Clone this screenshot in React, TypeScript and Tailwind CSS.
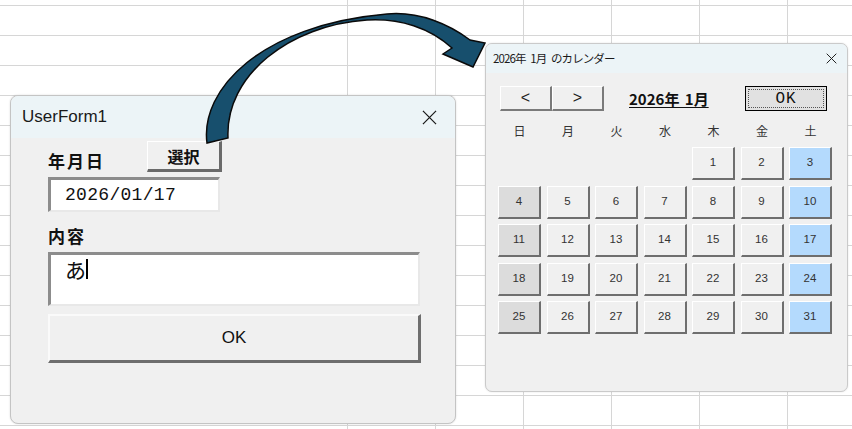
import React from 'react';

const JP = "font-['Noto_Sans_CJK_JP','Noto_Sans',sans-serif]";

function GridBackground() {
  const rows = Array.from({ length: 15 });
  const cols = Array.from({ length: 6 });
  return (
    <>
      <div className="absolute inset-0 flex flex-col">
        <div className="h-[5px] shrink-0" />
        {rows.map((_, i) => (
          <div key={i} className="h-[30px] shrink-0 border-t border-[#d6d6d6]" />
        ))}
      </div>
      <div className="absolute inset-0 flex">
        <div className="w-[347px] shrink-0" />
        {cols.map((_, i) => (
          <div key={i} className="w-[88px] shrink-0 border-l border-[#d6d6d6]" />
        ))}
      </div>
    </>
  );
}

function CloseX({ size, stroke }: { size: number; stroke: number }) {
  return (
    <svg width={size} height={size} viewBox="0 0 16 16">
      <path d="M1 1 L15 15 M15 1 L1 15" stroke="#1a1a1a" strokeWidth={stroke} fill="none" />
    </svg>
  );
}

function UserForm() {
  return (
    <div className="absolute left-[10px] top-[95px] w-[446px] h-[329px] rounded-[8px] border border-[#c4c4c4] bg-[#f0f0f0] overflow-hidden shadow-[0_0_2px_rgba(0,0,0,0.15)]">
      <div className="h-[42px] bg-[#ecf4f7] flex items-center justify-between pl-[11px] pr-[18px]">
        <span className="font-['Liberation_Sans',sans-serif] text-[17px] text-[#1a1a1a]">UserForm1</span>
        <CloseX size={15} stroke={1.3} />
      </div>
      <div className="flex flex-col pl-[37px] pt-[3px]">
        <div className="flex h-[31px]">
          <span className={`${JP} w-[99px] self-end mb-[1px] text-[17px] leading-[20px] font-bold tracking-[2px] text-[#111]`}>年月日</span>
          <div className={`${JP} w-[75px] h-[31px] flex items-center justify-center bg-[#f0f0f0] border-t border-l border-white border-b-[3px] border-r-[3px] border-b-[#6a6a6a] border-r-[#6a6a6a] text-[16px] font-bold text-[#111]`}>選択</div>
        </div>
        <div className="mt-[5px] w-[172px] h-[35px] bg-white border-b-2 border-r-2 border-[#e8e8e8] border-t-[3px] border-l-[3px] border-t-[#8c8c8c] border-l-[#8c8c8c] flex items-center pl-[14px]">
          <span className="font-['Liberation_Mono',monospace] text-[18px] tracking-[0.3px] text-[#111]">2026/01/17</span>
        </div>
        <span className={`${JP} mt-[14px] h-[20px] text-[17px] leading-[20px] font-bold tracking-[2px] text-[#111]`}>内容</span>
        <div className="mt-[6px] w-[372px] h-[54px] bg-white border-b-2 border-r-2 border-[#e8e8e8] border-t-[3px] border-l-[3px] border-t-[#8c8c8c] border-l-[#8c8c8c] flex items-start pl-[14px] pt-[1px]">
          <span className={`${JP} text-[21px] leading-[26px] text-[#111]`}>あ</span>
          <span className="mt-[3px] w-[2px] h-[20px] bg-black" />
        </div>
        <div className="mt-[8px] w-[373px] h-[49px] bg-[#f0f0f0] border-t-2 border-l-2 border-[#fafafa] border-b-[3px] border-r-[3px] border-b-[#6e6e6e] border-r-[#6e6e6e] flex items-center justify-center">
          <span className="font-['Liberation_Sans',sans-serif] text-[17px] text-[#111]">OK</span>
        </div>
      </div>
    </div>
  );
}

const weekdays = ['日', '月', '火', '水', '木', '金', '土'];
const cells: (number | null)[] = [null, null, null, null, ...Array.from({ length: 31 }, (_, i) => i + 1)];

function Calendar() {
  return (
    <div className="absolute left-[485px] top-[43px] w-[363px] h-[349px] rounded-[7px] border border-[#cacaca] bg-[#f0f0f0] overflow-hidden shadow-[0_0_2px_rgba(0,0,0,0.12)]">
      <div className="h-[29px] bg-[#ecf4f7] flex items-center justify-between pl-[7px] pr-[10px]">
        <span className={`${JP} text-[11.5px] tracking-[-0.9px] [word-spacing:3px] text-[#1a1a1a]`}>2026年 1月 のカレンダー</span>
        <CloseX size={11} stroke={1.4} />
      </div>
      <div className="flex flex-col pl-[12px] pt-[13px]">
        <div className="flex items-center h-[25px]">
          <div className="ml-[2px] w-[52px] h-[25px] flex items-center justify-center bg-[#f0f0f0] border-t border-l border-white border-b-2 border-r-2 border-b-[#7a7a7a] border-r-[#7a7a7a] font-['Liberation_Sans',sans-serif] text-[16px] text-[#222]">&lt;</div>
          <div className="w-[52px] h-[25px] flex items-center justify-center bg-[#f0f0f0] border-t border-l border-white border-b-2 border-r-2 border-b-[#7a7a7a] border-r-[#7a7a7a] font-['Liberation_Sans',sans-serif] text-[16px] text-[#222]">&gt;</div>
          <span className={`${JP} ml-[25px] mt-[2px] w-[116px] text-[15px] font-bold underline underline-offset-[2px] [word-spacing:2px] text-[#111]`}>2026年 1月</span>
          <div className="w-[82px] h-[25px] border border-black bg-[#e1e1e1] p-[2px]">
            <div className="w-full h-full border border-dotted border-[#555] flex items-center justify-center">
              <span className="font-['Liberation_Mono',monospace] text-[16px] tracking-[1px] text-[#111]">OK</span>
            </div>
          </div>
        </div>
        <div className="grid grid-cols-[repeat(7,43px)] gap-x-[5.5px] mt-[12px]">
          {weekdays.map((w) => (
            <div key={w} className={`${JP} h-[16px] text-center text-[12px] leading-[16px] text-[#333]`}>{w}</div>
          ))}
        </div>
        <div className="grid grid-cols-[repeat(7,43px)] gap-x-[5.5px] gap-y-[5.5px] mt-[8px]">
          {cells.map((d, i) => {
            const col = i % 7;
            if (d === null) return <div key={i} className="h-[33px]" />;
            const bg = col === 0 ? 'bg-[#dcdcdc]' : col === 6 ? 'bg-[#b4dafd]' : 'bg-[#f0f0f0]';
            return (
              <div key={i} className={`${bg} h-[33px] flex items-center justify-center border-t border-l border-white border-b-2 border-r-2 border-b-[#6e6e6e] border-r-[#6e6e6e] font-['Liberation_Sans',sans-serif] text-[11.5px] text-[#333]`}>
                {d}
              </div>
            );
          })}
        </div>
      </div>
    </div>
  );
}

function Arrow() {
  return (
    <svg className="absolute inset-0 pointer-events-none" width="852" height="429" viewBox="0 0 852 429">
      <path
        d="M207,143 C200,90 260,25 387,14 C420,11 450,25 470,40 L485,43 L473,67 L443,54 L452,48 C430,28 400,18 367,20 C290,25 225,75 228,138 Z"
        fill="#174f6d"
        stroke="#0a0a0a"
        strokeWidth="1.5"
        strokeLinejoin="miter"
      />
    </svg>
  );
}

export default function App() {
  return (
    <div className="relative w-[852px] h-[429px] overflow-hidden bg-white">
      <GridBackground />
      <UserForm />
      <Calendar />
      <Arrow />
    </div>
  );
}
